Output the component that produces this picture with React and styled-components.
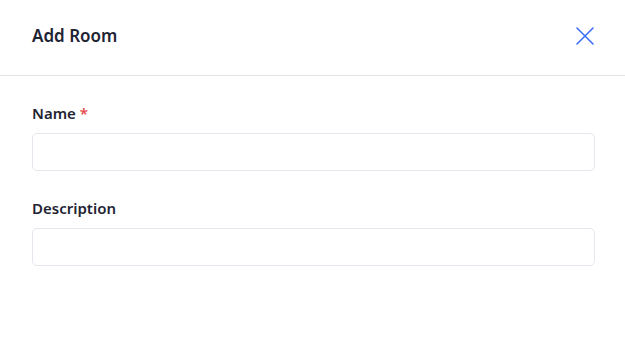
import styled, { createGlobalStyle } from "styled-components";

const GlobalStyle = createGlobalStyle`
  * { box-sizing: border-box; }
  html, body {
    margin: 0;
    padding: 0;
    background: #ffffff;
    font-family: "Noto Sans", "Open Sans", sans-serif;
  }
`;

export default function App() {
  return (
    <>
      <GlobalStyle />
      <Modal>
        <Header>
          <Title>Add Room</Title>
          <CloseButton aria-label="Close">
            <svg width="20" height="20" viewBox="0 0 20 20" fill="none">
              <path
                d="M2 2L18 18M18 2L2 18"
                stroke="#3a6ff7"
                strokeWidth="1.6"
                strokeLinecap="round"
              />
            </svg>
          </CloseButton>
        </Header>

        <Body>
          <Field>
            <Label>
              Name <Required>*</Required>
            </Label>
            <Input type="text" />
          </Field>

          <Field>
            <Label>Description</Label>
            <Input type="text" />
          </Field>
        </Body>
      </Modal>
    </>
  );
}

const Modal = styled.div`
  width: 100%;
  height: 100vh;
  display: flex;
  flex-direction: column;
  background: #ffffff;
`;

const Header = styled.div`
  height: 76px;
  display: flex;
  align-items: center;
  justify-content: space-between;
  padding: 0 30px 4px 32px;
  border-bottom: 1px solid #e2e4e9;
`;

const Title = styled.h2`
  margin: 0;
  font-size: 17px;
  font-weight: 600;
  color: #1f2433;
`;

const CloseButton = styled.button`
  display: flex;
  align-items: center;
  justify-content: center;
  padding: 0;
  border: none;
  background: none;
  cursor: pointer;
`;

const Body = styled.div`
  display: flex;
  flex-direction: column;
  gap: 27px;
  padding: 27px 30px 0 32px;
`;

const Field = styled.div`
  display: flex;
  flex-direction: column;
  gap: 10px;
`;

const Label = styled.label`
  font-size: 15px;
  line-height: 20px;
  font-weight: 600;
  color: #1f2433;
`;

const Required = styled.span`
  color: #e5484d;
`;

const Input = styled.input`
  height: 38px;
  width: 100%;
  padding: 0 12px;
  border: 1px solid #e3e6ec;
  border-radius: 5px;
  background: #ffffff;
  font-family: inherit;
  font-size: 14px;
  outline: none;
`;
